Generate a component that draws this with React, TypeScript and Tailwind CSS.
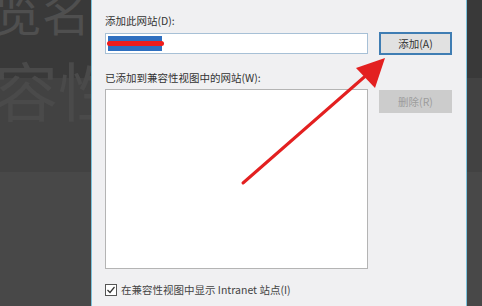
const cjk = "font-['Microsoft_YaHei','Noto_Sans_CJK_SC',sans-serif]";

function DarkSide({ rows, className }: { rows: string[]; className: string }) {
  // faded page text behind the dialog
  return (
    <div className={`relative flex flex-col overflow-hidden ${className}`}>
      <div className="h-[78px] bg-[#393939]" />
      <div className="h-[94px] bg-[#424242]" />
      <div className="flex-1 bg-[#484848]" />
      {rows.length > 0 && (
        <div className={`absolute inset-0 overflow-hidden pl-0 -ml-[6px] -mt-[22px] flex flex-col text-[#4f4f4f] whitespace-nowrap ${cjk}`}>
          {rows.map((r, i) => (
            <div key={i} className={i === 0 ? 'text-[48px] leading-[64px]' : 'mt-[6px] text-[64px] leading-[80px] text-[#4a4a4a]'}>
              {r}
            </div>
          ))}
        </div>
      )}
    </div>
  );
}

export default function App() {
  return (
    <div className={`relative flex w-[482px] h-[306px] overflow-hidden ${cjk}`}>
      <DarkSide rows={['览名', '容性']} className="w-[91px]" />

      <div className="w-[376px] bg-[#f0f0f2] border-x border-[#7cc3dc] pl-[13px] pr-[13px] text-[10.5px] text-[#333]">
        <div className="pt-[14px] leading-[14px]">添加此网站(D):</div>
        <div className="mt-[4px] flex items-center gap-[11px]">
          <div className="relative w-[263px] h-[21px] bg-white border border-[#a7c0d6] px-[2px] py-[2px]">
            <div className="w-[54px] h-full bg-[#2f6fc0]" />
            <div className="absolute left-[1px] top-[7px] w-[57px] h-[5px] rounded-full bg-[#ee1c1c]" />
          </div>
          <button className="w-[73px] h-[23px] bg-[#e1e1e1] border-2 border-[#3f7db3] text-[10.5px] text-[#333]">
            添加(A)
          </button>
        </div>

        <div className="mt-[16px] leading-[14px]">已添加到兼容性视图中的网站(W):</div>
        <div className="mt-[4px] flex items-start gap-[11px]">
          <div className="w-[263px] h-[180px] bg-white border border-[#b4b4b4]" />
          <button className="mt-[1px] w-[73px] h-[23px] bg-[#cccccc] text-[10.5px] text-[#9c9c9c]">
            删除(R)
          </button>
        </div>

        <div className="mt-[14px] flex items-center gap-[4px] text-[#444]">
          <div className="w-[12px] h-[12px] border border-[#555] bg-white flex items-center justify-center">
            <svg width="10" height="10" viewBox="0 0 10 10">
              <path d="M1.5 5 L4 7.5 L8.5 2" fill="none" stroke="#333" strokeWidth="1.2" />
            </svg>
          </div>
          <span className="leading-[14px]">在兼容性视图中显示 Intranet 站点(I)</span>
        </div>
      </div>

      <DarkSide rows={[]} className="flex-1" />

      <svg className="absolute left-0 top-0 pointer-events-none" width="482" height="306">
        <line x1="243" y1="183" x2="370" y2="72" stroke="#e32020" strokeWidth="3" strokeLinecap="round" />
        <polygon points="385,58 356,68 375,88" fill="#e32020" />
      </svg>
    </div>
  );
}
